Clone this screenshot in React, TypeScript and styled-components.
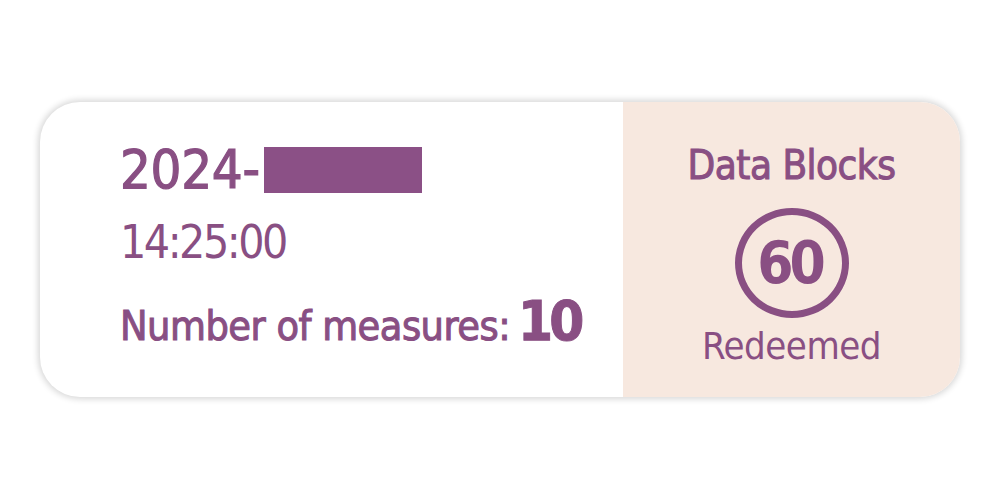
import React from 'react';
import styled, { createGlobalStyle } from 'styled-components';

const purple = '#894f83';

const GlobalStyle = createGlobalStyle`
  html, body {
    margin: 0;
    padding: 0;
    background: #ffffff;
  }
  body {
    font-family: 'DejaVu Sans Condensed', 'DejaVu Sans', sans-serif;
  }
`;

const Page = styled.div`
  width: 1000px;
  height: 500px;
  box-sizing: border-box;
  padding: 102px 40px 0 40px;
`;

const Card = styled.div`
  display: flex;
  height: 295px;
  border-radius: 40px;
  overflow: hidden;
  background: #ffffff;
  box-shadow: 0 0 6px 2px rgba(0, 0, 0, 0.16);
`;

const Main = styled.div`
  flex: 1;
  display: flex;
  flex-direction: column;
  padding: 36px 0 0 80px;
  color: ${purple};
`;

const DateRow = styled.div`
  display: flex;
  align-items: center;
  font-size: 54px;
  line-height: 64px;
  height: 64px;
  letter-spacing: -0.3px;
  -webkit-text-stroke: 1.2px ${purple};
`;

const Redacted = styled.span`
  display: inline-block;
  width: 158px;
  height: 46px;
  margin-left: 4px;
  background: #8b5086;
`;

const Time = styled.div`
  margin-top: 12px;
  font-size: 46px;
  line-height: 56px;
  letter-spacing: -2.5px;
`;

const Measures = styled.div`
  margin-top: 18px;
  display: flex;
  align-items: baseline;
  font-size: 41px;
  letter-spacing: -0.5px;
  -webkit-text-stroke: 1px ${purple};
`;

const Count = styled.span`
  margin-left: 8px;
  font-size: 56px;
  font-weight: 700;
  letter-spacing: -4px;
`;

const Side = styled.div`
  width: 337px;
  display: flex;
  flex-direction: column;
  align-items: center;
  padding-top: 38px;
  background: #f7e8df;
  color: ${purple};
`;

const SideTitle = styled.div`
  font-size: 40px;
  line-height: 50px;
  letter-spacing: -0.5px;
  -webkit-text-stroke: 1px ${purple};
`;

const Ring = styled.div`
  margin-top: 18px;
  width: 96px;
  height: 96px;
  border: 7px solid ${purple};
  border-radius: 50%;
  display: flex;
  align-items: center;
  justify-content: center;
  font-size: 58px;
  font-weight: 700;
  letter-spacing: -4px;
  line-height: 1;
  padding-right: 4px;
  box-sizing: content-box;
`;

const Redeemed = styled.div`
  margin-top: 4px;
  font-size: 38px;
  line-height: 48px;
  letter-spacing: -0.5px;
`;

export default function App() {
  return (
    <Page>
      <GlobalStyle />
      <Card>
        <Main>
          <DateRow>
            2024-<Redacted />
          </DateRow>
          <Time>14:25:00</Time>
          <Measures>
            Number of measures:<Count>10</Count>
          </Measures>
        </Main>
        <Side>
          <SideTitle>Data Blocks</SideTitle>
          <Ring>60</Ring>
          <Redeemed>Redeemed</Redeemed>
        </Side>
      </Card>
    </Page>
  );
}
